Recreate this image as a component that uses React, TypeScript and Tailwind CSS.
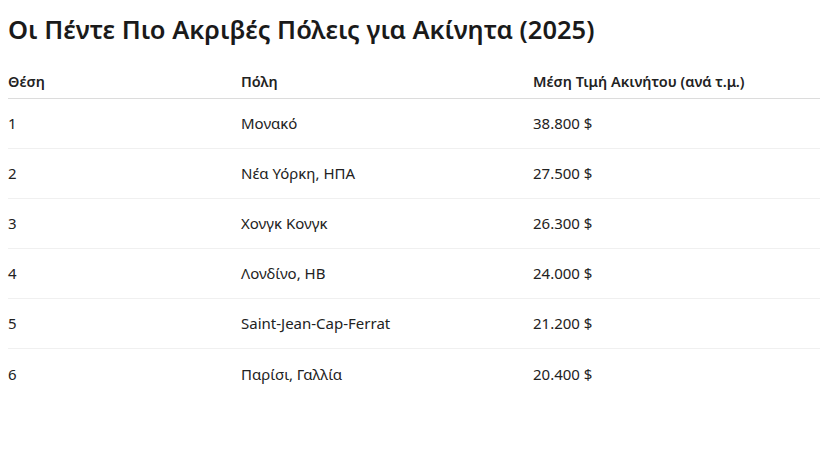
const rows = [
	{ rank: "1", city: "Μονακό", price: "38.800 $" },
	{ rank: "2", city: "Νέα Υόρκη, ΗΠΑ", price: "27.500 $" },
	{ rank: "3", city: "Χονγκ Κονγκ", price: "26.300 $" },
	{ rank: "4", city: "Λονδίνο, ΗΒ", price: "24.000 $" },
	{ rank: "5", city: "Saint-Jean-Cap-Ferrat", price: "21.200 $" },
	{ rank: "6", city: "Παρίσι, Γαλλία", price: "20.400 $" },
];

const App = () => {
	return (
		<div className="min-h-[453px] bg-white pl-2 text-[#222] font-['Noto_Sans',sans-serif]">
			<h1 className="pt-[13px] text-[25.5px] leading-8 font-semibold text-[#1a1a1a]">
				Οι Πέντε Πιο Ακριβές Πόλεις για Ακίνητα (2025)
			</h1>
			<table className="mt-[18px] w-full border-collapse text-left">
				<thead>
					<tr className="border-b border-[#dcdcdc]">
						<th className="w-[233px] pt-[9px] pb-[8px] text-[14.5px] leading-[18px] font-semibold">Θέση</th>
						<th className="w-[292px] pt-[9px] pb-[8px] text-[14.5px] leading-[18px] font-semibold">Πόλη</th>
						<th className="pt-[9px] pb-[8px] text-[14.5px] leading-[18px] font-semibold">
							Μέση Τιμή Ακινήτου (ανά τ.μ.)
						</th>
					</tr>
				</thead>
				<tbody>
					{rows.map((r, i) => (
						<tr key={r.rank} className={i < rows.length - 1 ? "border-b border-[#f0f0f0]" : ""}>
							<td className="h-[50px] text-[15px]">{r.rank}</td>
							<td className="h-[50px] text-[15px]">{r.city}</td>
							<td className="h-[50px] text-[15px]">{r.price}</td>
						</tr>
					))}
				</tbody>
			</table>
		</div>
	);
};

export default App;
